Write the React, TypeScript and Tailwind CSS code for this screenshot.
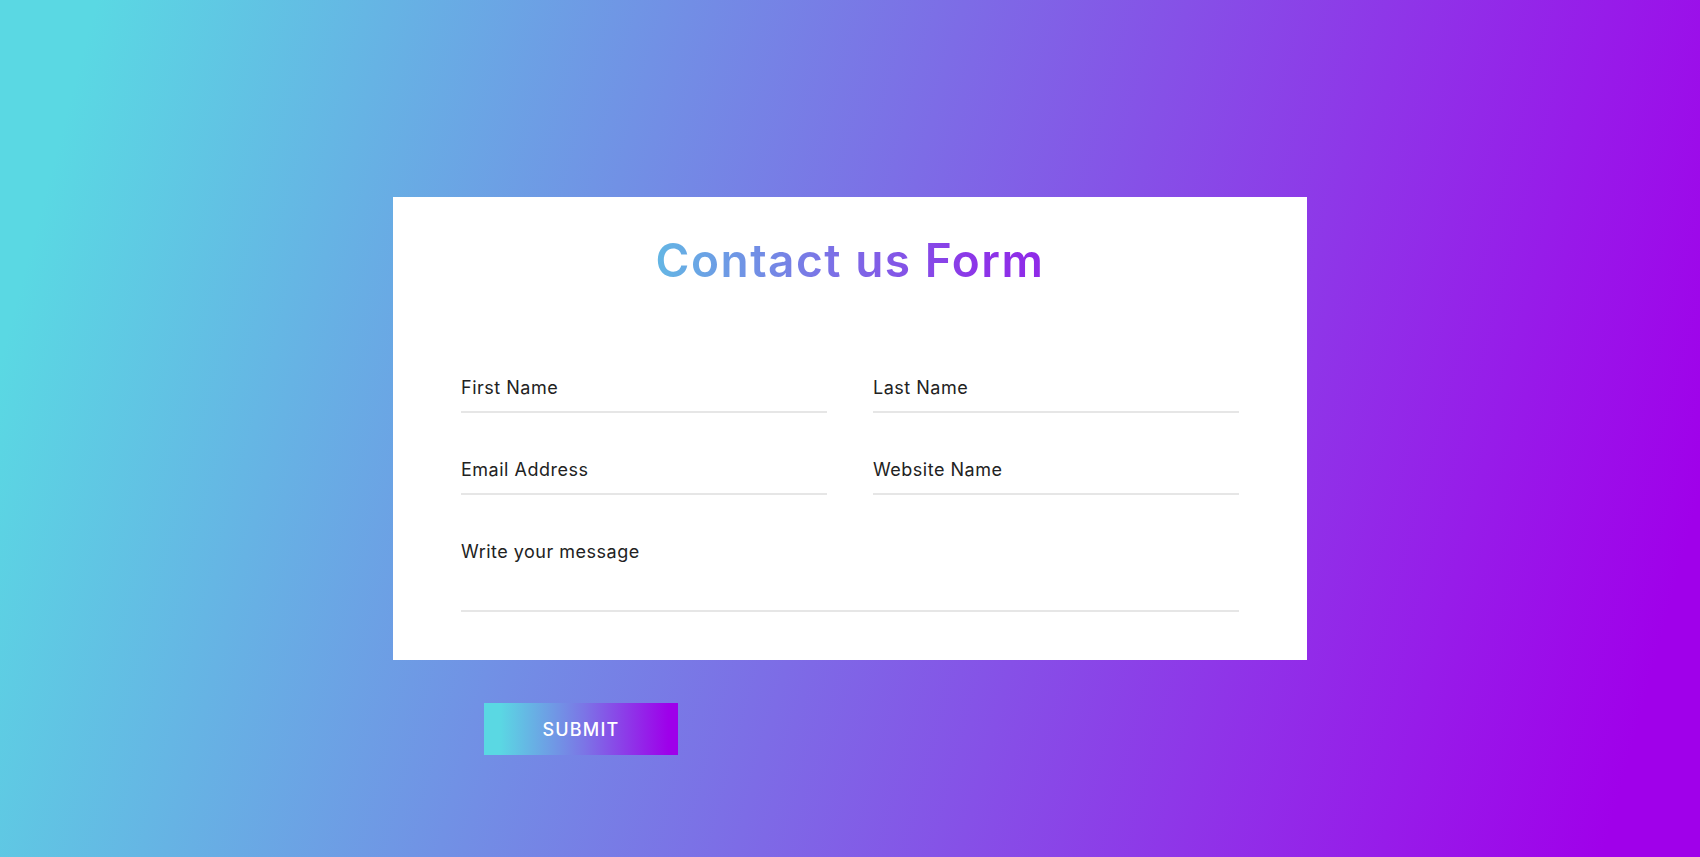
export default function App() {
  return (
    <div className="min-h-screen w-full bg-[linear-gradient(105deg,#5ad8e3_5%,#7d6ce6_50%,#a000ea_95%)] pt-[197px] pb-[80px] font-['Inter',sans-serif]">
      <div className="mx-auto w-[914px] bg-white px-[68px] pt-[40px] pb-[48px]">
        <h1 className="bg-[linear-gradient(90deg,#66a2e6_0%,#58d8e3_14%,#7a76e6_46%,#8c36e8_66%,#9a06e8_100%)] bg-clip-text text-center text-[46px] font-semibold leading-none tracking-[1.5px] text-transparent">
          Contact us Form
        </h1>

        <form className="mt-[90px] grid grid-cols-2 gap-x-[46px] gap-y-[42px]">
          <input
            type="text"
            placeholder="First Name"
            className="h-10 border-b-2 border-[#e6e6e6] bg-transparent pb-[10px] text-[18px] tracking-[0.5px] text-[#222] outline-none placeholder:text-[#222]"
          />
          <input
            type="text"
            placeholder="Last Name"
            className="h-10 border-b-2 border-[#e6e6e6] bg-transparent pb-[10px] text-[18px] tracking-[0.5px] text-[#222] outline-none placeholder:text-[#222]"
          />
          <input
            type="email"
            placeholder="Email Address"
            className="h-10 border-b-2 border-[#e6e6e6] bg-transparent pb-[10px] text-[18px] tracking-[0.5px] text-[#222] outline-none placeholder:text-[#222]"
          />
          <input
            type="text"
            placeholder="Website Name"
            className="h-10 border-b-2 border-[#e6e6e6] bg-transparent pb-[10px] text-[18px] tracking-[0.5px] text-[#222] outline-none placeholder:text-[#222]"
          />
          <textarea
            placeholder="Write your message"
            className="col-span-2 h-[75px] resize-none border-b-2 border-[#e6e6e6] bg-transparent pt-[2px] text-[18px] leading-[25px] tracking-[0.5px] text-[#222] outline-none placeholder:text-[#222]"
          />
        </form>
      </div>

      <div className="mx-auto mt-[43px] flex w-[914px]">
        <button
          type="button"
          className="ml-[91px] h-[52px] w-[194px] bg-[linear-gradient(90deg,#5ad8e3_8%,#7c74e6_52%,#9e00ea_95%)] text-[18px] font-medium uppercase tracking-[1.2px] text-white"
        >
          Submit
        </button>
      </div>
    </div>
  );
}
